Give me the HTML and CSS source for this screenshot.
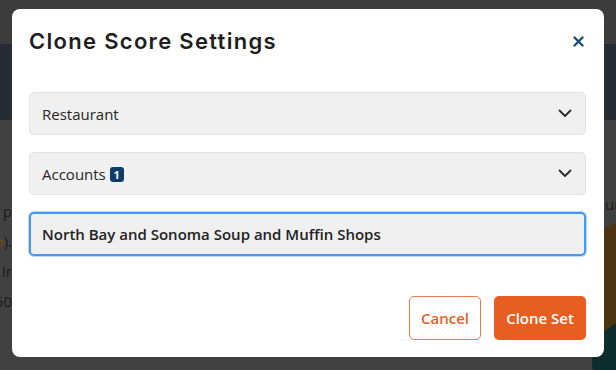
FILE: index.html
```html
<!DOCTYPE html>
<html lang="en">
<head>
    <meta charset="UTF-8">
    <meta name="viewport" content="width=device-width, initial-scale=1.0">
    <title>Clone Score Settings</title>
    <link rel="stylesheet" href="styles.css">
</head>
<body>
    <div class="page">
        <div class="topbar"></div>
        <div class="navbar"></div>
        <div class="content">
            <div class="left-text">
                <span>p</span>
                <span><b>o</b>).</span>
                <span>Ir</span>
                <span>50</span>
            </div>
            <div class="right-text">ur</div>
            <div class="blob"></div>
            <div class="corner"></div>
        </div>
    </div>

    <div class="overlay">
        <div class="modal">
            <div class="modal-header">
                <h2>Clone Score Settings</h2>
                <span class="close">
                    <svg width="11" height="11" viewBox="0 0 11 11"><path d="M1.5 1.5 L9.5 9.5 M9.5 1.5 L1.5 9.5" stroke="#1b4c7b" stroke-width="2.4" stroke-linecap="round"/></svg>
                </span>
            </div>
            <div class="modal-body">
                <div class="select">
                    <span>Restaurant</span>
                    <svg class="chev" width="14" height="9" viewBox="0 0 14 9"><path d="M1.5 1.5 L7 7 L12.5 1.5" fill="none" stroke="#2b2b2b" stroke-width="1.8" stroke-linecap="round" stroke-linejoin="round"/></svg>
                </div>
                <div class="select">
                    <span>Accounts <span class="badge">1</span></span>
                    <svg class="chev" width="14" height="9" viewBox="0 0 14 9"><path d="M1.5 1.5 L7 7 L12.5 1.5" fill="none" stroke="#2b2b2b" stroke-width="1.8" stroke-linecap="round" stroke-linejoin="round"/></svg>
                </div>
                <input class="name" type="text" value="North Bay and Sonoma Soup and Muffin Shops">
            </div>
            <div class="modal-footer">
                <button class="btn cancel">Cancel</button>
                <button class="btn primary">Clone Set</button>
            </div>
        </div>
    </div>
</body>
</html>
```

FILE: styles.css
```css
body {
    margin: 0;
    font-family: "Open Sans", "Liberation Sans", sans-serif;
    background-color: #414141;
    overflow: hidden;
}
.page {
    height: 370px;
    display: flex;
    flex-direction: column;
}
.topbar {
    height: 44px;
    background-color: #3c3c3c;
}
.navbar {
    height: 76px;
    background-color: #252c35;
}
.content {
    flex: 1;
    position: relative;
    background-color: #414141;
    overflow: hidden;
}
.left-text {
    width: 12px;
    padding-top: 80px;
    display: flex;
    flex-direction: column;
    align-items: flex-end;
    gap: 8px;
    color: #1c1c1c;
    font-size: 15px;
    line-height: 22px;
    overflow: hidden;
    white-space: nowrap;
}
.left-text b {
    color: #7a4a10;
    font-weight: 400;
}
.right-text {
    position: absolute;
    left: 605px;
    top: 74px;
    color: #1c1c1c;
    font-size: 15px;
}
.blob {
    position: absolute;
    left: 575px;
    top: 98px;
    width: 130px;
    height: 130px;
    border-radius: 50%;
    background-color: #4a3412;
    box-shadow: 10px 62px 0 -10px #454545;
}
.corner {
    position: absolute;
    left: 592px;
    top: 198px;
    width: 90px;
    height: 90px;
    border-radius: 50%;
    background-color: #0d2c2d;
}
.overlay {
    position: absolute;
    inset: 0;
}
.modal {
    position: absolute;
    left: 12px;
    top: 9px;
    width: 592px;
    height: 348px;
    box-sizing: border-box;
    background-color: #fff;
    border-radius: 8px;
    padding: 0 18px 17px 17px;
    display: flex;
    flex-direction: column;
}
.modal-header {
    display: flex;
    justify-content: space-between;
    align-items: center;
    padding-top: 18px;
    height: 28px;
}
.modal-header h2 {
    margin: 0;
    font-family: "Inter", "Liberation Sans", sans-serif;
    font-size: 22px;
    font-weight: 600;
    color: #1e1e1e;
    letter-spacing: 1.3px;
}
.close {
    display: flex;
    margin-right: 2px;
}
.modal-body {
    margin-top: 37px;
    display: flex;
    flex-direction: column;
    gap: 17px;
}
.select {
    height: 43px;
    box-sizing: border-box;
    background-color: #f0f0f0;
    border: 1px solid #e2e2e2;
    border-radius: 5px;
    padding: 0 13px 0 12px;
    display: flex;
    justify-content: space-between;
    align-items: center;
    font-size: 15px;
    color: #262626;
}
.badge {
    display: inline-block;
    background-color: #0e3d6b;
    color: #fff;
    font-size: 11px;
    font-weight: 700;
    line-height: 15px;
    width: 14px;
    text-align: center;
    border-radius: 3px;
    vertical-align: 1px;
}
.name {
    height: 44px;
    box-sizing: border-box;
    background-color: #efefef;
    border: 2px solid #4598ee;
    border-radius: 5px;
    box-shadow: 0 0 0 1px #b9d7f6;
    padding: 0 11px;
    font-family: "Open Sans", "Liberation Sans", sans-serif;
    font-size: 15px;
    font-weight: 600;
    color: #222;
    outline: none;
}
.modal-footer {
    margin-top: auto;
    display: flex;
    justify-content: flex-end;
    gap: 13px;
}
.btn {
    height: 44px;
    font-family: "Open Sans", "Liberation Sans", sans-serif;
    font-size: 15px;
    font-weight: 600;
    border-radius: 5px;
    cursor: pointer;
}
.cancel {
    width: 72px;
    background-color: #fff;
    color: #e8601f;
    border: 1px solid #ec7a40;
}
.primary {
    width: 92px;
    background-color: #e85e20;
    color: #fff;
    border: none;
}
```
